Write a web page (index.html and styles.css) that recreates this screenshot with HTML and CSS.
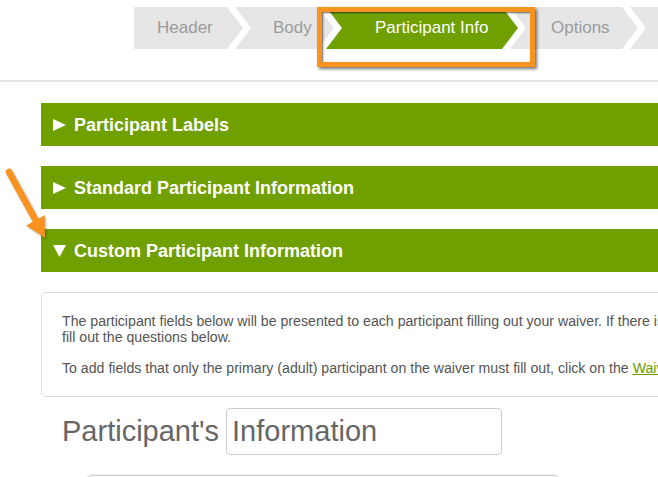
FILE: index.html
```html
<!DOCTYPE html>
<html lang="en">
<head>
<meta charset="utf-8">
<title>Participant Info</title>
<link rel="stylesheet" href="styles.css">
</head>
<body>
<div class="page">
  <nav class="steps">
    <div class="step step-first step-header">Header</div>
    <div class="step step-body">Body</div>
    <div class="step step-active step-participant">Participant Info</div>
    <div class="step step-options">Options</div>
    <div class="step step-next"></div>
  </nav>
  <div class="step-highlight"></div>
  <svg class="callout-arrow" width="60" height="90" viewBox="0 150 60 90">
    <line x1="9" y1="165" x2="36" y2="214" stroke="#f7931e" stroke-width="6.5" stroke-linecap="round"/>
    <polygon points="45,231 26.2,218.6 44.6,208.2" fill="#f7931e"/>
  </svg>
  <hr class="divider">
  <main class="content">
    <h2 class="panel-title">
      <svg class="caret" width="13" height="12" viewBox="0 0 13 12"><polygon points="0,0 13,6 0,12" fill="#fff"/></svg>
      Participant Labels
    </h2>
    <h2 class="panel-title">
      <svg class="caret" width="13" height="12" viewBox="0 0 13 12"><polygon points="0,0 13,6 0,12" fill="#fff"/></svg>
      Standard Participant Information
    </h2>
    <h2 class="panel-title">
      <svg class="caret" width="13" height="12" viewBox="0 0 13 12"><polygon points="0,0 13,0 6.5,12" fill="#fff"/></svg>
      Custom Participant Information
    </h2>
    <div class="info-box">
      <p>The participant fields below will be presented to each participant filling out your waiver. If there is more than one participant on the waiver, each participant will need to<br>fill out the questions below.</p>
      <p>To add fields that only the primary (adult) participant on the waiver must fill out, click on the <a href="#" class="info-link">Waiver Fields</a> tab.</p>
    </div>
    <div class="field-row">
      <span class="field-label">Participant's</span>
      <input class="field-input" type="text" value="Information">
    </div>
    <div class="next-card"></div>
  </main>
</div>
</body>
</html>
```
FILE: styles.css
```css
html, body {
  margin: 0;
  padding: 0;
}
body {
  font-family: "Liberation Sans", Arial, Helvetica, sans-serif;
  background: #fff;
  width: 658px;
  height: 477px;
  overflow: hidden;
}
.page {
  position: relative;
  width: 1300px;
}

/* step bar */
.steps {
  display: flex;
  margin: 7px 0 0 134px;
  height: 42px;
}
.step {
  flex: none;
  box-sizing: border-box;
  height: 42px;
  line-height: 42px;
  font-size: 17px;
  color: #9b9b9b;
  background: #e6e6e6;
  white-space: nowrap;
  margin-left: -8px;
  clip-path: polygon(0 0, calc(100% - 16px) 0, 100% 50%, calc(100% - 16px) 100%, 0 100%, 16px 50%);
}
.step-first {
  margin-left: 0;
  clip-path: polygon(0 0, calc(100% - 16px) 0, 100% 50%, calc(100% - 16px) 100%, 0 100%);
}
.step-header { width: 109px; padding-left: 23px; }
.step-body { width: 99px; padding-left: 38px; }
.step-participant { width: 192px; padding-left: 49px; }
.step-options { width: 128px; padding-left: 41px; }
.step-next { width: 140px; }
.step-active {
  background: #6fa000;
  color: #fff;
}
.step-highlight {
  position: absolute;
  left: 317px;
  top: 0;
  width: 218px;
  height: 60px;
  box-sizing: border-box;
  border: 5px solid #f7931e;
  box-shadow: inset 1px 1px 2px rgba(0, 0, 0, 0.6), 2px 2px 3px rgba(0, 0, 0, 0.55);
}
.callout-arrow {
  position: absolute;
  left: 0;
  top: 150px;
  filter: drop-shadow(1px 1px 1px rgba(0, 0, 0, 0.35));
}

.divider {
  margin: 31px 0 0;
  border: 0;
  height: 2px;
  background: #e6e6e6;
}

/* content */
.content {
  padding: 21px 0 0 41px;
}
.panel-title {
  display: flex;
  align-items: center;
  gap: 8px;
  box-sizing: border-box;
  margin: 0 0 20px;
  height: 43px;
  padding: 2px 0 0 12px;
  background: #70a000;
  color: #fff;
  font-size: 18px;
  font-weight: bold;
}
.caret {
  flex: none;
  margin-top: -1px;
}
.info-box {
  border: 1px solid #ddd;
  border-radius: 5px;
  padding: 20px;
  color: #555;
  font-size: 14.15px;
  line-height: 16px;
}
.info-box p {
  margin: 0 0 15px;
  white-space: nowrap;
}
.info-box p:last-child {
  margin-bottom: 0;
}
.info-link {
  color: #6a9c00;
  text-decoration: underline;
}
.field-row {
  display: flex;
  align-items: center;
  gap: 7px;
  margin-top: 11px;
  padding-left: 21px;
}
.field-label {
  font-size: 29px;
  color: #666;
}
.field-input {
  box-sizing: border-box;
  width: 276px;
  height: 47px;
  margin: 0;
  padding: 0 5px;
  border: 1px solid #ccc;
  border-radius: 4px;
  font-family: "Liberation Sans", Arial, Helvetica, sans-serif;
  font-size: 29px;
  color: #666;
  background: #fff;
}
.next-card {
  margin: 20px 0 0 45px;
  width: 472px;
  height: 60px;
  border: 1px solid #ccc;
  border-radius: 6px;
  box-shadow: 0 0 2px rgba(0, 0, 0, 0.2);
}
```
